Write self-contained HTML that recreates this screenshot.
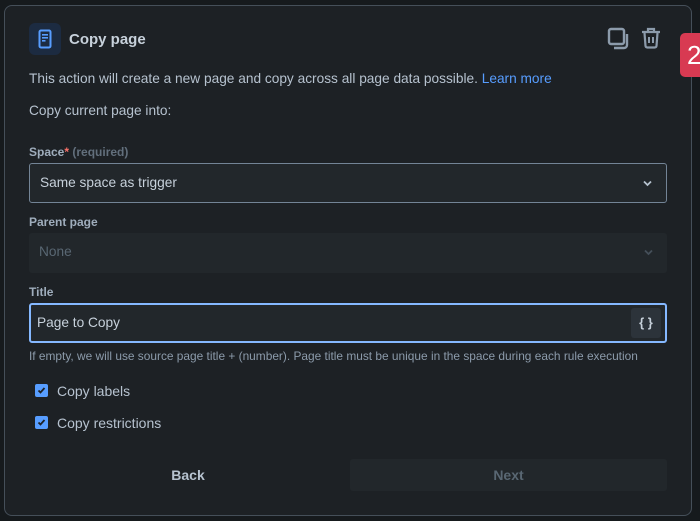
<!DOCTYPE html>
<html><head><style>
*{box-sizing:border-box;margin:0;padding:0}
body{width:700px;height:521px;background:#161a1d;font-family:"Liberation Sans",sans-serif;position:relative;overflow:hidden;color:#b6c2cf}
.panel{position:absolute;left:4px;top:5px;width:688px;height:511px;background:#1d2125;border:1px solid #454f59;border-radius:8px}
.abs{position:absolute}
.lbl{position:absolute;left:29px;font-size:12px;font-weight:bold;color:#9fadbc}
.field{position:absolute;left:29px;width:638px;height:40px;border-radius:3px;background:#22272b;font-size:14px;padding-left:10px;line-height:38px}
.cb{position:absolute;left:35px;width:13px;height:13px;background:#579dff;border-radius:2px}
.cb svg{position:absolute;left:1px;top:1px}
</style></head><body>
<div class="panel"></div>
<div class="abs" style="left:29px;top:23px;width:32px;height:32px;background:#1c2b41;border-radius:6px"></div>
<svg class="abs" style="left:37px;top:29px" width="16" height="20" viewBox="0 0 16 20"><rect x="2.5" y="1.5" width="11" height="17" rx="1.5" fill="none" stroke="#579dff" stroke-width="2"/><rect x="5" y="5" width="6" height="1.6" fill="#579dff"/><rect x="5" y="8" width="6" height="1.6" fill="#579dff"/><rect x="5" y="11" width="3.5" height="1.6" fill="#579dff"/></svg>
<div class="abs" style="left:69px;top:31px;font-size:15px;font-weight:bold;color:#c7d1db">Copy page</div>
<svg class="abs" style="left:607px;top:27px" width="24" height="24" viewBox="0 0 24 24"><rect x="2" y="2" width="15" height="15" rx="2" fill="none" stroke="#8c9bab" stroke-width="2.4"/><path d="M20 7v11a3 3 0 0 1-3 3H7" fill="none" stroke="#8c9bab" stroke-width="2.4"/></svg>
<svg class="abs" style="left:641px;top:27px" width="20" height="22" viewBox="0 0 20 22"><path d="M1 5h18M7 5V2h6v3" fill="none" stroke="#8c9bab" stroke-width="2.2"/><path d="M3.5 6l1 13a2 2 0 0 0 2 1.5h7a2 2 0 0 0 2-1.5l1-13" fill="none" stroke="#8c9bab" stroke-width="2.2"/><path d="M8 10v6M12 10v6" stroke="#8c9bab" stroke-width="2"/></svg>
<div class="abs" style="left:680px;top:33px;width:26px;height:44px;background:#d83a52;border-radius:5px;color:#fff;font-size:26px;line-height:44px;padding-left:7px">2</div>
<div class="abs" style="left:29px;top:71px;font-size:13.7px;color:#b6c2cf;white-space:nowrap">This action will create a new page and copy across all page data possible. <span style="color:#579dff">Learn more</span></div>
<div class="abs" style="left:29px;top:103px;font-size:13.7px">Copy current page into:</div>
<div class="lbl" style="top:145px">Space<span style="color:#f87168">*</span> <span style="color:#626f7c">(required)</span></div>
<div class="field" style="top:163px;border:1px solid #738496;color:#c7d1db;font-size:13.7px">Same space as trigger<svg class="abs" style="right:14px;top:16px" width="9" height="7" viewBox="0 0 9 7"><path d="M1 1.5l3.5 3.5 3.5-3.5" fill="none" stroke="#b6c2cf" stroke-width="1.8"/></svg></div>
<div class="lbl" style="top:215px">Parent page</div>
<div class="field" style="top:233px;color:#596773;font-size:13.7px">None<svg class="abs" style="right:14px;top:16px" width="9" height="7" viewBox="0 0 9 7"><path d="M1 1.5l3.5 3.5 3.5-3.5" fill="none" stroke="#454f59" stroke-width="1.8"/></svg></div>
<div class="lbl" style="top:285px">Title</div>
<div class="field" style="top:303px;border:2px solid #85b8ff;padding-left:6px;line-height:36px;color:#c7d1db;font-size:13.7px">Page to Copy<div class="abs" style="right:4px;top:3px;width:30px;height:30px;background:#2c333a;border-radius:3px;text-align:center;line-height:29px;font-size:13px;font-weight:bold">{ }</div></div>
<div class="abs" style="left:29px;top:349px;font-size:11.9px;color:#8c9bab;white-space:nowrap">If empty, we will use source page title + (number). Page title must be unique in the space during each rule execution</div>
<div class="cb" style="top:384px"><svg width="11" height="11" viewBox="0 0 11 11"><path d="M2.5 5.5l2 2 4-4.5" fill="none" stroke="#1d2125" stroke-width="1.8"/></svg></div>
<div class="abs" style="left:57px;top:383px;font-size:14px">Copy labels</div>
<div class="cb" style="top:416px"><svg width="11" height="11" viewBox="0 0 11 11"><path d="M2.5 5.5l2 2 4-4.5" fill="none" stroke="#1d2125" stroke-width="1.8"/></svg></div>
<div class="abs" style="left:57px;top:415px;font-size:14px">Copy restrictions</div>
<div class="abs" style="left:29px;top:459px;width:318px;height:32px;text-align:center;line-height:32px;font-size:14px;font-weight:bold">Back</div>
<div class="abs" style="left:350px;top:459px;width:317px;height:32px;background:#22272b;border-radius:3px;text-align:center;line-height:32px;font-size:14px;font-weight:bold;color:#596773">Next</div>
</body></html>
